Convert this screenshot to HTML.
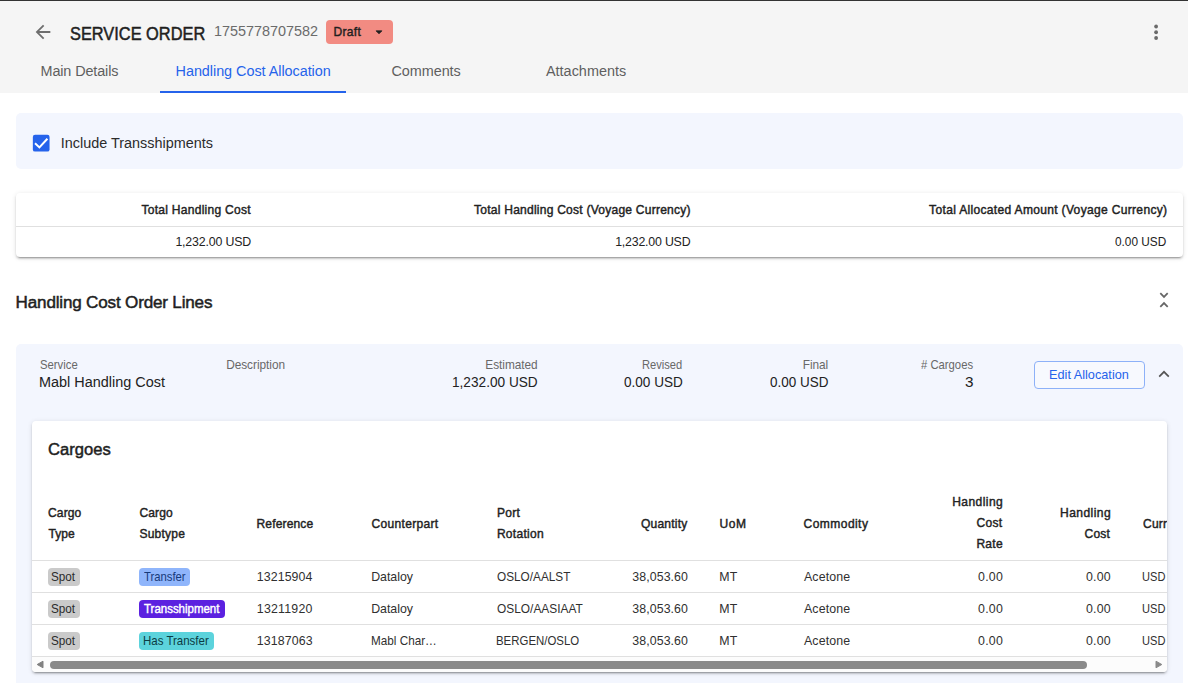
<!DOCTYPE html>
<html lang="en">
<head>
<meta charset="utf-8">
<title>Service Order 1755778707582 - Handling Cost Allocation</title>
<style>
*{box-sizing:border-box}
html,body{margin:0;padding:0}
body{width:1188px;height:683px;overflow:hidden;position:relative;background:#fff;font-family:"Liberation Sans",sans-serif;}
.abs,.t,svg{position:absolute}
.t{white-space:nowrap;line-height:20px;height:20px;display:block;transform-origin:0 50%}
.m{-webkit-text-stroke:0.42px currentColor}
.b{font-weight:bold}
.h{-webkit-text-stroke:0.5px currentColor}
#topline{left:0;top:0;width:1188px;height:1px;background:#333}
#hdr{left:0;top:1px;width:1188px;height:92px;background:#f5f5f5}
#draft{left:326px;top:20px;width:67px;height:24px;background:#f28b82;border-radius:4px}
#ul{left:160px;top:91px;width:186px;height:2px;background:#2563eb}
#cbpanel{left:16px;top:113px;width:1167px;height:56px;background:#f3f6fe;border-radius:5px}
#cb{left:33px;top:134.5px;width:16.5px;height:16.5px;background:#2563eb;border-radius:2px}
.card{background:#fff;border-radius:4px;box-shadow:0 3px 1px -2px rgba(0,0,0,.2),0 2px 2px 0 rgba(0,0,0,.14),0 1px 5px 0 rgba(0,0,0,.12)}
#totals{left:16px;top:193px;width:1167px;height:64px}
.hl{height:1px;background:#e0e0e0}
#panel{left:16px;top:344px;width:1167px;height:360px;background:#f3f6fe;border-radius:5px}
#editbtn{left:1034px;top:361px;width:111px;height:28px;border:1px solid #8db1f8;border-radius:4px;background:#f7f9fe}
#cargo{left:32px;top:421px;width:1135px;height:251px;overflow:hidden}
.bdg{height:18px;border-radius:4px}
#sb{left:32px;top:657px;width:1135px;height:15px;background:#fcfcfc;border-radius:0 0 4px 4px}
#thumb{left:50px;top:660.5px;width:1037px;height:8px;border-radius:4px;background:#8a8a8a}
</style>
</head>
<body>
<div class="abs" id="hdr"></div>
<div class="abs" id="topline"></div>
<!-- back arrow -->
<svg style="left:31.8px;top:21px" width="22" height="22" viewBox="0 0 24 24"><path fill="#6e6e6e" d="M20 11H7.83l5.59-5.59L12 4l-8 8 8 8 1.41-1.41L7.83 13H20v-2z"/></svg>
<div class="abs" id="draft"></div>
<svg style="left:371px;top:23.7px" width="16" height="16" viewBox="0 0 24 24"><path fill="#1f1f1f" stroke="#1f1f1f" stroke-width="1.2" stroke-linejoin="round" d="M7.6 10.3h8.8L12 14.7z"/></svg>
<!-- more vert -->
<svg style="left:1146px;top:20px" width="20" height="24" viewBox="0 0 20 24"><g fill="#6a6a6a"><circle cx="10.1" cy="6.5" r="1.9"/><circle cx="10.1" cy="12.25" r="1.9"/><circle cx="10.1" cy="18" r="1.9"/></g></svg>
<div class="abs" id="ul"></div>

<div class="abs" id="cbpanel"></div>
<svg style="left:30px;top:130px" width="24" height="26" viewBox="0 0 24 26"><rect x="2.85" y="4.8" width="16.7" height="16.8" rx="2.2" fill="#2563eb"/><path fill="none" stroke="#fff" stroke-width="2" d="M5.0 13.3l4.4 4.1L17.4 8.7"/></svg>

<div class="abs card" id="totals"></div>
<div class="abs hl" style="left:16px;top:226px;width:1167px"></div>

<!-- unfold less -->
<svg style="left:1156px;top:289px" width="16" height="22" viewBox="0 0 16 22"><g fill="none" stroke="#666" stroke-width="1.75"><path d="M4.3 4.2L8 7.9l3.7-3.7"/><path d="M4.3 17.8L8 14.1l3.7 3.7"/></g></svg>

<div class="abs" id="panel"></div>
<div class="abs" id="editbtn"></div>
<svg style="left:1156px;top:366px" width="16" height="16" viewBox="0 0 16 16"><path fill="none" stroke="#555" stroke-width="1.7" d="M3.2 10.6L8 5.8l4.8 4.8"/></svg>

<div class="abs card" id="cargo"></div>
<div class="abs hl" style="left:32px;top:560px;width:1135px"></div>
<div class="abs hl" style="left:32px;top:592px;width:1135px"></div>
<div class="abs hl" style="left:32px;top:624px;width:1135px"></div>
<div class="abs hl" style="left:32px;top:656px;width:1135px"></div>

<div class="abs bdg" style="left:48px;top:568px;width:32px;background:#cacaca"></div>
<div class="abs bdg" style="left:48px;top:600px;width:32px;background:#cacaca"></div>
<div class="abs bdg" style="left:48px;top:632px;width:32px;background:#cacaca"></div>
<div class="abs bdg" style="left:139px;top:568px;width:51px;background:#8fb5fb"></div>
<div class="abs bdg" style="left:139px;top:600px;width:86px;background:#5b21e0"></div>
<div class="abs bdg" style="left:139px;top:632px;width:75px;background:#5cd3dc"></div>

<div class="abs" id="sb"></div>
<div class="abs" id="thumb"></div>
<svg style="left:36px;top:660px" width="8" height="9" viewBox="0 0 8 9"><path fill="#808080" stroke="#808080" stroke-width="1" stroke-linejoin="round" d="M7 1.2v6.6L1.2 4.5z"/></svg>
<svg style="left:1155px;top:660px" width="8" height="9" viewBox="0 0 8 9"><path fill="#8a8a8a" stroke="#8a8a8a" stroke-width="1" stroke-linejoin="round" d="M1 1.2v6.6L6.8 4.5z"/></svg>

<span id="t0" class="t h" style="left:70.08px;top:24.00px;font-size:18.09px;color:#1f1f1f;transform:scaleX(0.9055);">SERVICE ORDER</span>
<span id="t1" class="t" style="left:213.88px;top:21.00px;font-size:14.42px;color:#6b6b6b;letter-spacing:-0.006px;">1755778707582</span>
<span id="t2" class="t m" style="left:333.52px;top:22.00px;font-size:12.06px;color:#1f1f1f;letter-spacing:0.308px;">Draft</span>
<span id="t3" class="t" style="left:40.50px;top:61.00px;font-size:14.42px;color:#5f5f5f;letter-spacing:-0.119px;">Main Details</span>
<span id="t4" class="t" style="left:175.56px;top:61.00px;font-size:14.42px;color:#2563eb;letter-spacing:-0.041px;">Handling Cost Allocation</span>
<span id="t5" class="t" style="left:391.46px;top:61.00px;font-size:14.42px;color:#5f5f5f;letter-spacing:-0.048px;">Comments</span>
<span id="t6" class="t" style="left:545.94px;top:61.00px;font-size:14.42px;color:#5f5f5f;letter-spacing:0.020px;">Attachments</span>
<span id="t7" class="t" style="left:60.86px;top:133.00px;font-size:14.42px;color:#2b2b2b;letter-spacing:-0.006px;">Include Transshipments</span>
<span id="t8" class="t m" style="left:141.44px;top:200.00px;font-size:12.06px;color:#222;letter-spacing:0.265px;">Total Handling Cost</span>
<span id="t9" class="t m" style="left:474.06px;top:200.00px;font-size:12.06px;color:#222;letter-spacing:0.230px;">Total Handling Cost (Voyage Currency)</span>
<span id="t10" class="t m" style="left:929.12px;top:200.00px;font-size:12.06px;color:#222;letter-spacing:0.316px;">Total Allocated Amount (Voyage Currency)</span>
<span id="t11" class="t" style="left:175.38px;top:232.00px;font-size:12.36px;color:#222;letter-spacing:-0.158px;">1,232.00 USD</span>
<span id="t12" class="t" style="left:615.20px;top:232.00px;font-size:12.36px;color:#222;letter-spacing:-0.204px;">1,232.00 USD</span>
<span id="t13" class="t" style="left:1115.40px;top:232.00px;font-size:12.36px;color:#222;transform:scaleX(0.9571);">0.00 USD</span>
<span id="t14" class="t h" style="left:15.62px;top:293.00px;font-size:17.08px;color:#1f1f1f;letter-spacing:-0.184px;">Handling Cost Order Lines</span>
<span id="t15" class="t" style="left:39.60px;top:355.00px;font-size:11.85px;color:#686868;transform:scaleX(0.9554);">Service</span>
<span id="t16" class="t" style="left:226.14px;top:355.00px;font-size:11.85px;color:#686868;letter-spacing:-0.035px;">Description</span>
<span id="t17" class="t" style="left:485.32px;top:355.00px;font-size:11.85px;color:#686868;letter-spacing:-0.034px;">Estimated</span>
<span id="t18" class="t" style="left:642.38px;top:355.00px;font-size:11.85px;color:#686868;transform:scaleX(0.9409);">Revised</span>
<span id="t19" class="t" style="left:802.76px;top:355.00px;font-size:11.85px;color:#686868;letter-spacing:-0.068px;">Final</span>
<span id="t20" class="t" style="left:920.98px;top:355.00px;font-size:11.85px;color:#686868;transform:scaleX(0.9529);"># Cargoes</span>
<span id="t21" class="t" style="left:39.20px;top:372.00px;font-size:15.14px;color:#222;transform:scaleX(0.9545);">Mabl Handling Cost</span>
<span id="t22" class="t" style="left:452.06px;top:372.00px;font-size:15.14px;color:#222;transform:scaleX(0.9017);">1,232.00 USD</span>
<span id="t23" class="t" style="left:624.08px;top:372.00px;font-size:15.14px;color:#222;transform:scaleX(0.8961);">0.00 USD</span>
<span id="t24" class="t" style="left:769.98px;top:372.00px;font-size:15.14px;color:#222;transform:scaleX(0.8903);">0.00 USD</span>
<span id="t25" class="t" style="left:964.70px;top:372.00px;font-size:15.14px;color:#222;transform:scaleX(1.0093);">3</span>
<span id="t26" class="t" style="left:1049.44px;top:365.00px;font-size:13.39px;color:#2563eb;transform:scaleX(0.9506);">Edit Allocation</span>
<span id="t27" class="t h" style="left:47.98px;top:440.00px;font-size:17.08px;color:#1f1f1f;transform:scaleX(0.9717);">Cargoes</span>
<span id="t28" class="t m" style="left:47.98px;top:503.00px;font-size:12.06px;color:#222;letter-spacing:0.132px;">Cargo</span>
<span id="t29" class="t m" style="left:48.38px;top:524.00px;font-size:12.06px;color:#222;letter-spacing:0.085px;">Type</span>
<span id="t30" class="t m" style="left:139.42px;top:503.00px;font-size:12.06px;color:#222;letter-spacing:0.132px;">Cargo</span>
<span id="t31" class="t m" style="left:139.42px;top:524.00px;font-size:12.06px;color:#222;letter-spacing:0.230px;">Subtype</span>
<span id="t32" class="t m" style="left:256.52px;top:514.00px;font-size:12.06px;color:#222;letter-spacing:0.136px;">Reference</span>
<span id="t33" class="t m" style="left:371.60px;top:514.00px;font-size:12.06px;color:#222;letter-spacing:0.301px;">Counterpart</span>
<span id="t34" class="t m" style="left:496.90px;top:503.00px;font-size:12.06px;color:#222;letter-spacing:0.304px;">Port</span>
<span id="t35" class="t m" style="left:496.90px;top:524.00px;font-size:12.06px;color:#222;letter-spacing:0.278px;">Rotation</span>
<span id="t36" class="t m" style="left:640.92px;top:514.00px;font-size:12.06px;color:#222;letter-spacing:0.224px;">Quantity</span>
<span id="t37" class="t m" style="left:719.40px;top:514.00px;font-size:12.06px;color:#222;letter-spacing:0.631px;">UoM</span>
<span id="t38" class="t m" style="left:803.60px;top:514.00px;font-size:12.06px;color:#222;letter-spacing:0.425px;">Commodity</span>
<span id="t39" class="t m" style="left:952.14px;top:492.00px;font-size:12.06px;color:#222;letter-spacing:0.448px;">Handling</span>
<span id="t40" class="t m" style="left:976.54px;top:513.00px;font-size:12.06px;color:#222;letter-spacing:0.306px;">Cost</span>
<span id="t41" class="t m" style="left:976.40px;top:534.00px;font-size:12.06px;color:#222;letter-spacing:0.262px;">Rate</span>
<span id="t42" class="t m" style="left:1060.02px;top:503.00px;font-size:12.06px;color:#222;letter-spacing:0.448px;">Handling</span>
<span id="t43" class="t m" style="left:1084.60px;top:524.00px;font-size:12.06px;color:#222;letter-spacing:0.180px;">Cost</span>
<span class="abs" style="left:1143.00px;top:514.00px;width:24px;height:20px;overflow:hidden"><span id="t44" class="t m" style="left:0;top:0;font-size:12.06px;color:#222;letter-spacing:0.232px;">Currency</span></span>
<span id="t45" class="t" style="left:51.46px;top:567.00px;font-size:12.36px;color:#2b2b2b;transform:scaleX(0.9471);">Spot</span>
<span id="t46" class="t" style="left:143.78px;top:567.00px;font-size:12.36px;color:#173a7a;transform:scaleX(0.9138);">Transfer</span>
<span id="t47" class="t" style="left:256.82px;top:567.00px;font-size:12.36px;color:#303030;letter-spacing:0.083px;">13215904</span>
<span id="t48" class="t" style="left:371.20px;top:567.00px;font-size:12.36px;color:#303030;letter-spacing:-0.028px;">Dataloy</span>
<span id="t49" class="t" style="left:496.60px;top:567.00px;font-size:12.36px;color:#303030;transform:scaleX(0.9543);">OSLO/AALST</span>
<span id="t50" class="t" style="left:632.28px;top:567.00px;font-size:12.36px;color:#303030;letter-spacing:0.087px;">38,053.60</span>
<span id="t51" class="t" style="left:719.20px;top:567.00px;font-size:12.36px;color:#303030;letter-spacing:0.201px;">MT</span>
<span id="t52" class="t" style="left:804.00px;top:567.00px;font-size:12.36px;color:#303030;letter-spacing:0.123px;">Acetone</span>
<span id="t53" class="t" style="left:978.04px;top:567.00px;font-size:12.36px;color:#303030;letter-spacing:0.246px;">0.00</span>
<span id="t54" class="t" style="left:1086.10px;top:567.00px;font-size:12.36px;color:#303030;letter-spacing:0.119px;">0.00</span>
<span id="t55" class="t" style="left:1142.00px;top:567.00px;font-size:12.36px;color:#303030;transform:scaleX(0.8957);">USD</span>
<span id="t56" class="t" style="left:51.46px;top:599.00px;font-size:12.36px;color:#2b2b2b;transform:scaleX(0.9471);">Spot</span>
<span id="t57" class="t m" style="left:143.98px;top:599.00px;font-size:12.06px;color:#ffffff;transform:scaleX(0.9519);">Transshipment</span>
<span id="t58" class="t" style="left:256.82px;top:599.00px;font-size:12.36px;color:#303030;letter-spacing:0.215px;">13211920</span>
<span id="t59" class="t" style="left:371.20px;top:599.00px;font-size:12.36px;color:#303030;letter-spacing:-0.028px;">Dataloy</span>
<span id="t60" class="t" style="left:496.60px;top:599.00px;font-size:12.36px;color:#303030;transform:scaleX(0.9633);">OSLO/AASIAAT</span>
<span id="t61" class="t" style="left:632.28px;top:599.00px;font-size:12.36px;color:#303030;letter-spacing:0.087px;">38,053.60</span>
<span id="t62" class="t" style="left:719.20px;top:599.00px;font-size:12.36px;color:#303030;letter-spacing:0.201px;">MT</span>
<span id="t63" class="t" style="left:804.00px;top:599.00px;font-size:12.36px;color:#303030;letter-spacing:0.123px;">Acetone</span>
<span id="t64" class="t" style="left:978.04px;top:599.00px;font-size:12.36px;color:#303030;letter-spacing:0.246px;">0.00</span>
<span id="t65" class="t" style="left:1086.10px;top:599.00px;font-size:12.36px;color:#303030;letter-spacing:0.119px;">0.00</span>
<span id="t66" class="t" style="left:1142.00px;top:599.00px;font-size:12.36px;color:#303030;transform:scaleX(0.8957);">USD</span>
<span id="t67" class="t" style="left:51.46px;top:631.00px;font-size:12.36px;color:#2b2b2b;transform:scaleX(0.9471);">Spot</span>
<span id="t68" class="t" style="left:143.38px;top:631.00px;font-size:12.36px;color:#0c3c44;transform:scaleX(0.9292);">Has Transfer</span>
<span id="t69" class="t" style="left:256.82px;top:631.00px;font-size:12.36px;color:#303030;letter-spacing:0.111px;">13187063</span>
<span id="t70" class="t" style="left:371.00px;top:631.00px;font-size:12.36px;color:#303030;transform:scaleX(0.9485);">Mabl Char…</span>
<span id="t71" class="t" style="left:496.00px;top:631.00px;font-size:12.36px;color:#303030;transform:scaleX(0.9246);">BERGEN/OSLO</span>
<span id="t72" class="t" style="left:632.28px;top:631.00px;font-size:12.36px;color:#303030;letter-spacing:0.087px;">38,053.60</span>
<span id="t73" class="t" style="left:719.20px;top:631.00px;font-size:12.36px;color:#303030;letter-spacing:0.201px;">MT</span>
<span id="t74" class="t" style="left:804.00px;top:631.00px;font-size:12.36px;color:#303030;letter-spacing:0.123px;">Acetone</span>
<span id="t75" class="t" style="left:978.04px;top:631.00px;font-size:12.36px;color:#303030;letter-spacing:0.246px;">0.00</span>
<span id="t76" class="t" style="left:1086.10px;top:631.00px;font-size:12.36px;color:#303030;letter-spacing:0.119px;">0.00</span>
<span id="t77" class="t" style="left:1142.00px;top:631.00px;font-size:12.36px;color:#303030;transform:scaleX(0.8957);">USD</span>
</body>
</html>
